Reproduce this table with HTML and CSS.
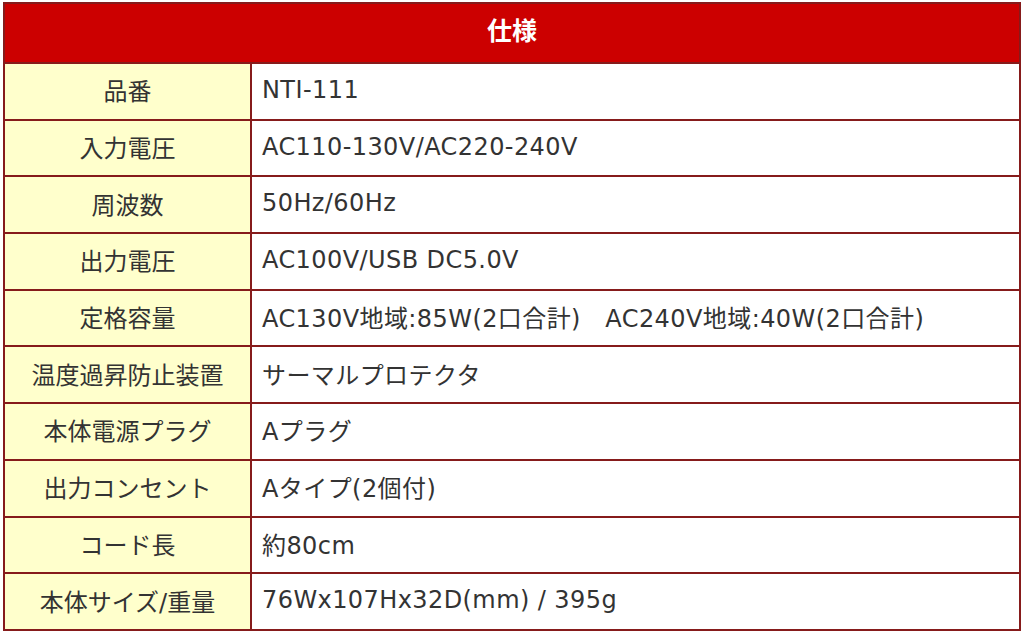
FILE: index.html
```html
<!DOCTYPE html>
<html lang="ja">
<head>
<meta charset="utf-8">
<title>仕様</title>
<link rel="stylesheet" href="styles.css">
</head>
<body>
<table class="spec">
  <colgroup>
    <col class="col-label">
    <col class="col-value">
  </colgroup>
  <thead>
    <tr><th colspan="2" class="spec-head">仕様</th></tr>
  </thead>
  <tbody>
    <tr><th class="label">品番</th><td class="value">NTI-111</td></tr>
    <tr><th class="label">入力電圧</th><td class="value">AC110-130V/AC220-240V</td></tr>
    <tr><th class="label">周波数</th><td class="value">50Hz/60Hz</td></tr>
    <tr><th class="label">出力電圧</th><td class="value">AC100V/USB DC5.0V</td></tr>
    <tr><th class="label">定格容量</th><td class="value">AC130V地域:85W(2口合計)　AC240V地域:40W(2口合計)</td></tr>
    <tr><th class="label">温度過昇防止装置</th><td class="value">サーマルプロテクタ</td></tr>
    <tr><th class="label">本体電源プラグ</th><td class="value">Aプラグ</td></tr>
    <tr><th class="label">出力コンセント</th><td class="value">Aタイプ(2個付)</td></tr>
    <tr><th class="label">コード長</th><td class="value">約80cm</td></tr>
    <tr><th class="label">本体サイズ/重量</th><td class="value">76Wx107Hx32D(mm) / 395g</td></tr>
  </tbody>
</table>
</body>
</html>
```

FILE: styles.css
```css
html, body {
  margin: 0;
  padding: 0;
  background: #ffffff;
}

body {
  padding: 2px 3px;
  font-family: "DejaVu Sans", "Noto Sans CJK JP", sans-serif;
  color: #333333;
}

.spec {
  width: 1018px;
  border-collapse: collapse;
  border: 2px solid #861b1b;
  table-layout: fixed;
}

.col-label {
  width: 247px;
}

.spec th,
.spec td {
  border: 2px solid #861b1b;
  font-size: 24px;
  font-weight: normal;
  height: 56.7px;
  padding: 0 0 3px 0;
  box-sizing: border-box;
}

.spec .spec-head {
  background: #cc0000;
  color: #ffffff;
  font-weight: bold;
  font-size: 25px;
  height: 60px;
  padding-bottom: 8px;
  text-align: center;
}

.spec .label {
  background: #ffffcc;
  text-align: center;
}

.spec .value {
  background: #ffffff;
  text-align: left;
  padding-left: 10px;
  white-space: nowrap;
  letter-spacing: 0.42px;
}
```
